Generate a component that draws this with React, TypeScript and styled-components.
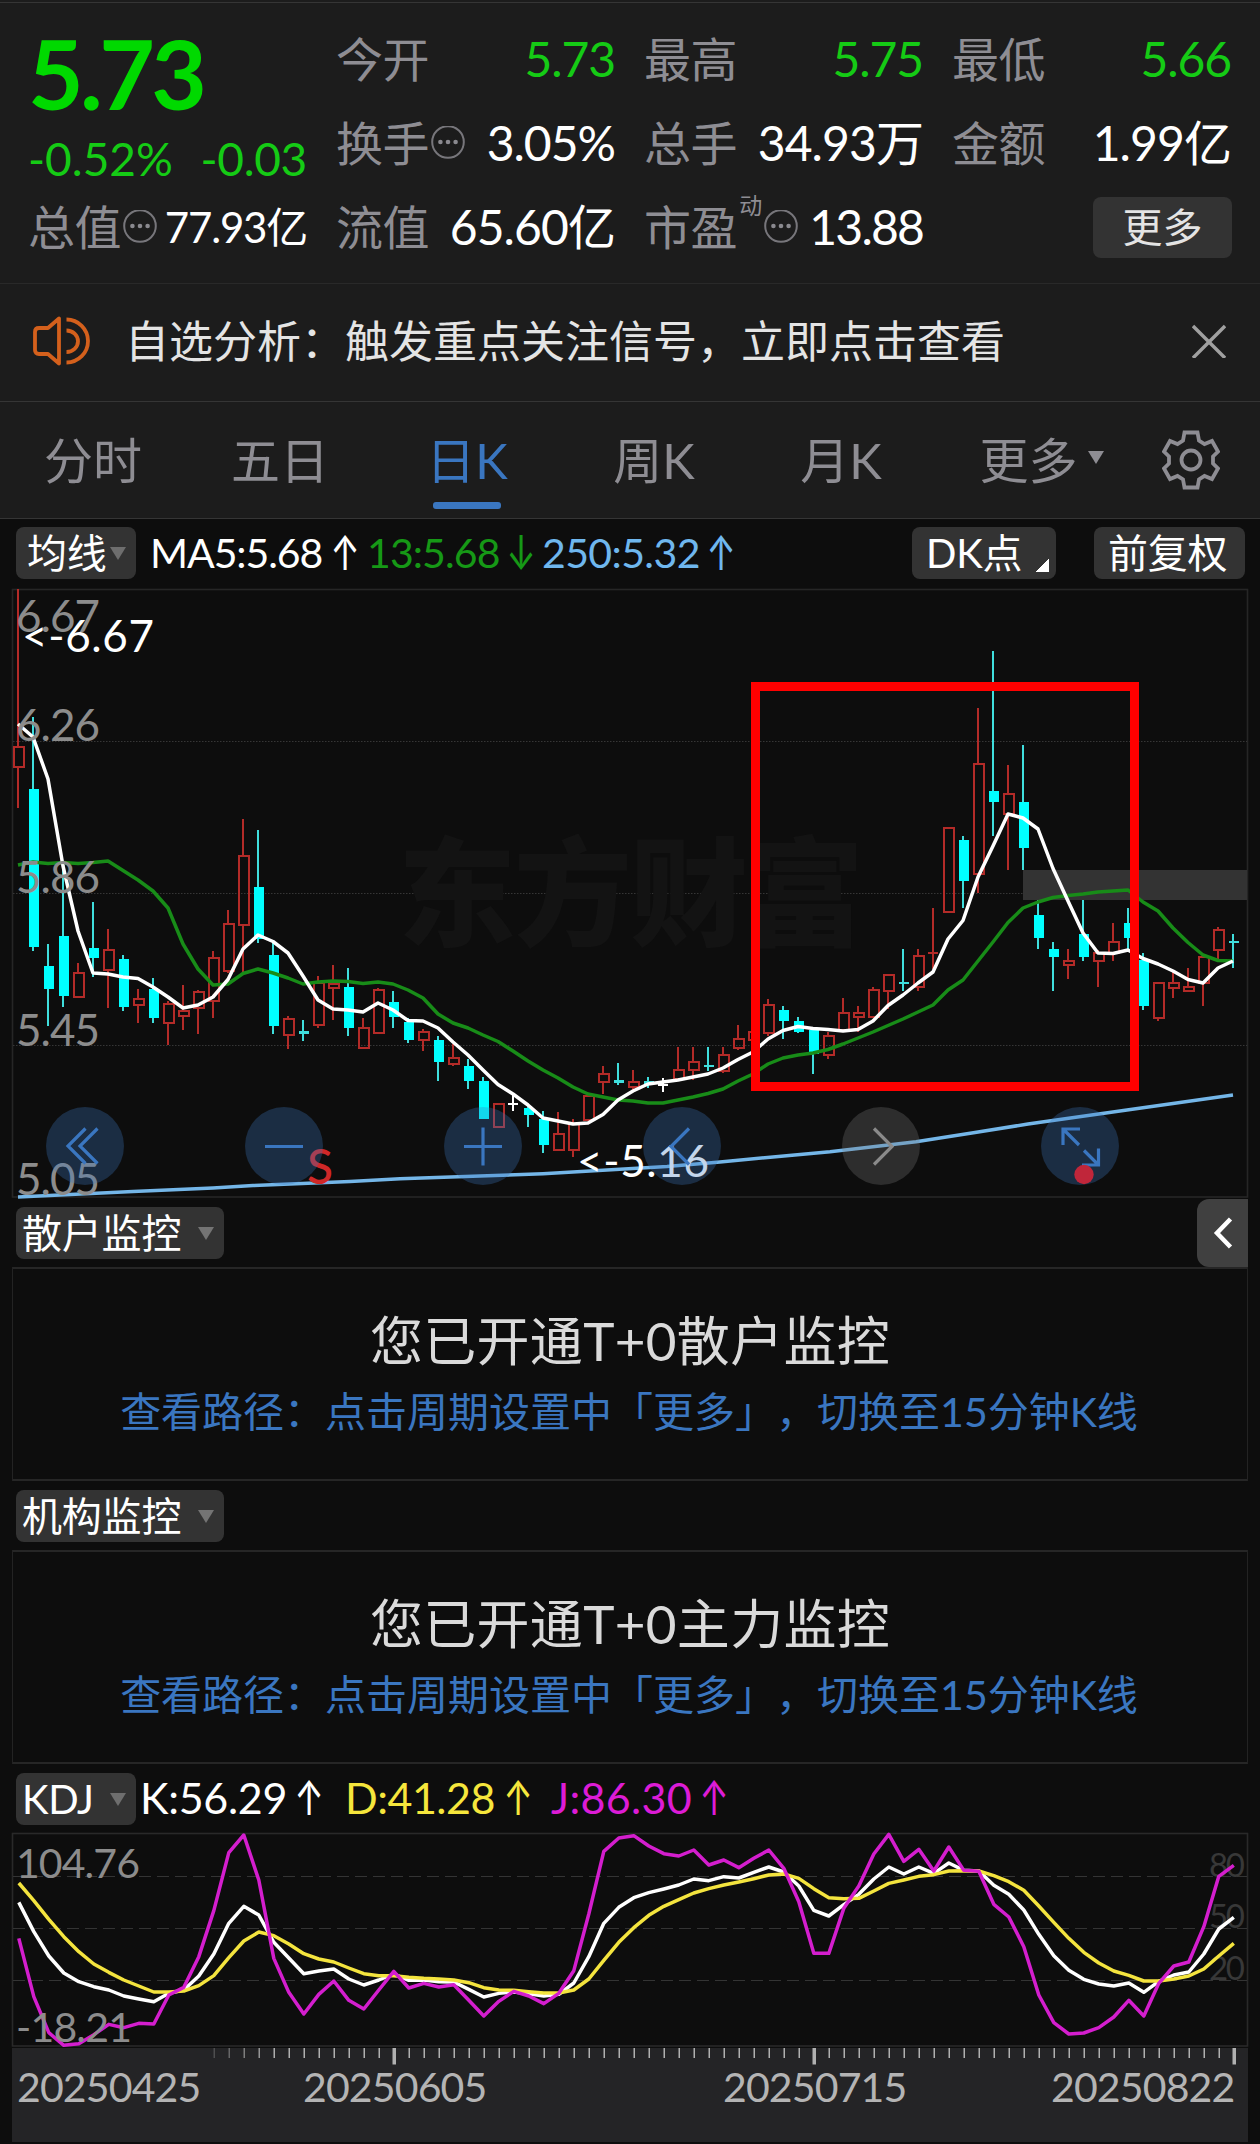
import React from "react";
import styled, { createGlobalStyle } from "styled-components";

const GlobalStyle = createGlobalStyle`
  * { box-sizing: border-box; }
  body { margin: 0; background: #0d0d0d; }
`;

const FONT = `Lato, "Noto Sans CJK SC", sans-serif`;
const BLUE = "#3a76c0";
const GREY = "#8e8d93";
const GREEN = "#15cb15";

const Page = styled.div`
  width: 1260px;
  height: 2144px;
  overflow: hidden;
  background: #0d0d0d;
  font-family: ${FONT};
  color: #fff;
  display: flex;
  flex-direction: column;
  white-space: nowrap;
  text-spacing-trim: space-all;
`;

/* ---------- quote header ---------- */

const QuoteHeader = styled.header`
  height: 284px;
  flex: none;
  background: #1c1c1c;
  border-bottom: 1px solid #292929;
  padding-top: 2px;
`;

const QuoteGrid = styled.div`
  border-top: 1px solid #353535;
  padding: 14px 0 0 28px;
  display: grid;
  grid-template-columns: repeat(4, 279px);
  grid-template-rows: repeat(3, 84px);
  column-gap: 29px;
`;

const PriceCell = styled.div`
  grid-row: span 2;
  display: flex;
  flex-direction: column;
  padding-top: 16px;
  color: ${GREEN};
`;

const Price = styled.div`
  font-size: 96px;
  font-weight: 700;
  line-height: 80px;
  letter-spacing: -3.6px;
  color: #00d900;
`;

const ChangeRow = styled.div`
  display: flex;
  justify-content: space-between;
  margin-top: 21px;
  font-size: 46px;
  line-height: 50px;
`;

const Num = styled.span<{ $ls?: number }>`
  letter-spacing: ${(p) => p.$ls ?? 0}px;
`;

const Cell = styled.div`
  display: flex;
  align-items: center;
  justify-content: space-between;
`;

const Label = styled.div`
  display: flex;
  align-items: center;
  gap: 2px;
  font-size: 47px;
  line-height: 60px;
  color: ${GREY};
  letter-spacing: -0.4px;
`;

const Value = styled.div<{ $size?: number; $color?: string; $ls?: number }>`
  font-size: ${(p) => p.$size ?? 48}px;
  line-height: 60px;
  color: ${(p) => p.$color ?? "#fff"};
  letter-spacing: ${(p) => p.$ls ?? -1.1}px;
`;

const Sup = styled.sup`
  font-size: 23px;
  line-height: 24px;
  align-self: flex-start;
  margin-top: -4px;
`;

const MoreButton = styled.button`
  all: unset;
  justify-self: end;
  align-self: center;
  width: 139px;
  height: 61px;
  margin-right: -1px;
  border-radius: 8px;
  background: #333;
  color: #e4e4e4;
  font-size: 40px;
  line-height: 58px;
  text-align: center;
`;

const Dots = () => (
  <svg width="34" height="34" viewBox="0 0 34 34" fill="none">
    <circle cx="17" cy="16" r="15.8" stroke="#77767b" strokeWidth="2" />
    <g fill="#8a898f">
      <circle cx="9.4" cy="16" r="2.3" />
      <circle cx="17" cy="16" r="2.3" />
      <circle cx="24.6" cy="16" r="2.3" />
    </g>
  </svg>
);

/* ---------- notice ---------- */

const Notice = styled.div`
  height: 118px;
  flex: none;
  background: #1c1c1c;
  border-bottom: 1px solid #353535;
  display: flex;
  align-items: center;
  padding: 0 34px 4px 32px;
`;

const NoticeText = styled.div`
  margin-left: 33px;
  flex: 1;
  font-size: 44px;
  line-height: 60px;
  color: #e4e4e4;
`;

/* ---------- period tabs ---------- */

const Tabs = styled.nav`
  height: 117px;
  flex: none;
  background: #1c1c1c;
  border-bottom: 1px solid #353535;
  display: flex;
`;

const Tab = styled.div<{ $w: number; $active?: boolean; $icon?: boolean }>`
  width: ${(p) => p.$w}px;
  display: flex;
  align-items: center;
  justify-content: center;
  gap: 10px;
  padding: 0 ${(p) => (p.$icon ? 0 : 1)}px ${(p) => (p.$icon ? 0 : 5)}px 0;
  font-size: 49px;
  color: ${(p) => (p.$active ? BLUE : GREY)};
  position: relative;
  &::after {
    content: "";
    display: ${(p) => (p.$active ? "block" : "none")};
    position: absolute;
    left: 59px;
    bottom: 9px;
    width: 68px;
    height: 7px;
    border-radius: 3px;
    background: ${BLUE};
  }
`;

/* ---------- indicator bars ---------- */

const Bar = styled.div<{ $h: number; $pt: number }>`
  height: ${(p) => p.$h}px;
  flex: none;
  display: flex;
  align-items: flex-start;
  padding: ${(p) => p.$pt}px 15px 0 16px;
`;

const Pill = styled.div<{ $w: number; $pl: number; $ml?: number }>`
  width: ${(p) => p.$w}px;
  height: 52px;
  margin-left: ${(p) => p.$ml ?? 0}px;
  padding: 0 10px 0 ${(p) => p.$pl}px;
  border-radius: 8px;
  background: #333;
  font-size: 40px;
  line-height: 50px;
  letter-spacing: -0.2px;
  display: flex;
  align-items: center;
  justify-content: space-between;
`;

const Caret = styled.i<{ $c?: string }>`
  flex: none;
  width: 0;
  height: 0;
  border: 8.5px solid transparent;
  border-top: 13.5px solid ${(p) => p.$c ?? "#6e6e6e"};
  border-bottom: 0;
`;

const Corner = styled.i`
  width: 14px;
  height: 14px;
  margin: 23px -3px 0 0;
  background: linear-gradient(135deg, transparent 50%, #fff 50%);
`;

const Readings = styled.div<{ $pl: number; $lh?: number }>`
  display: flex;
  flex: 1;
  padding-left: ${(p) => p.$pl}px;
  line-height: ${(p) => p.$lh ?? 52}px;
`;

const Reading = styled.div<{ $c: string; $w: number; $ls: number; $size?: number; $gap?: number }>`
  width: ${(p) => p.$w}px;
  font-size: ${(p) => p.$size ?? 41}px;
  letter-spacing: ${(p) => p.$ls}px;
  color: ${(p) => p.$c};
  display: flex;
  gap: ${(p) => p.$gap ?? 8}px;
`;

const Arrow = styled.span`
  font-family: Inter, sans-serif;
  font-size: 48px;
  letter-spacing: 0;
  width: 26px;
  display: flex;
  justify-content: center;
  transform: scaleX(0.74);
`;

const SideTab = styled.div`
  width: 51px;
  height: 68px;
  margin: -8px -3px 0 auto;
  border-radius: 12px 0 0 12px;
  background: #404040;
  display: flex;
  align-items: center;
  justify-content: center;
`;

/* ---------- charts ---------- */

const ChartBox = styled.div<{ $h: number }>`
  position: relative;
  height: ${(p) => p.$h}px;
  flex: none;
  svg { display: block; overflow: visible; }
`;

const Controls = styled.div`
  position: absolute;
  left: 46px;
  top: 518px;
  display: flex;
  gap: 121px;
`;

const RoundButton = styled.div<{ $muted?: boolean }>`
  width: 78px;
  height: 78px;
  border-radius: 50%;
  background: ${(p) => (p.$muted ? "rgba(118,118,118,.3)" : "rgba(58,118,192,.3)")};
  color: ${(p) => (p.$muted ? "#8a8a8a" : BLUE)};
`;

const Highlight = styled.div`
  position: absolute;
  left: 751px;
  top: 93px;
  width: 388px;
  height: 409px;
  border: 9px solid #f00;
`;

type Candle = [kind: "R" | "C" | "W", high: number, top: number, bottom: number, low: number];

const candles: Candle[] = [
  ["R", 589, 747, 767, 808], ["C", 717, 789, 947, 951], ["C", 944, 966, 989, 1026], ["C", 866, 936, 996, 1007],
  ["R", 963, 973, 997, 997], ["C", 902, 948, 958, 977], ["R", 929, 950, 970, 1008], ["C", 955, 959, 1007, 1011],
  ["R", 989, 999, 1005, 1023], ["C", 978, 989, 1018, 1023], ["R", 1001, 1004, 1023, 1045], ["R", 985, 1011, 1016, 1030],
  ["R", 990, 992, 1008, 1034], ["R", 951, 958, 1001, 1018], ["R", 910, 924, 971, 973], ["R", 819, 856, 925, 972],
  ["C", 830, 887, 939, 943], ["C", 943, 955, 1026, 1034], ["R", 1016, 1019, 1035, 1049], ["C", 1020, 1031, 1034, 1041],
  ["R", 976, 983, 1025, 1028], ["R", 965, 984, 988, 1020], ["C", 968, 987, 1028, 1036], ["R", 1018, 1028, 1048, 1048],
  ["R", 988, 990, 1033, 1033], ["C", 991, 1002, 1017, 1028], ["C", 1018, 1022, 1040, 1043], ["R", 1029, 1032, 1040, 1051],
  ["C", 1036, 1040, 1062, 1081], ["R", 1044, 1058, 1064, 1066], ["C", 1059, 1066, 1081, 1089], ["C", 1077, 1081, 1119, 1119],
  ["R", 1104, 1104, 1127, 1127], ["W", 1094, 1103, 1105, 1111], ["C", 1105, 1108, 1115, 1127], ["C", 1111, 1119, 1145, 1153],
  ["R", 1112, 1134, 1150, 1150], ["R", 1119, 1124, 1150, 1157], ["R", 1096, 1096, 1120, 1120], ["R", 1066, 1074, 1082, 1094],
  ["C", 1063, 1080, 1083, 1085], ["R", 1070, 1082, 1087, 1091], ["C", 1077, 1081, 1084, 1088], ["W", 1078, 1084, 1086, 1092],
  ["R", 1047, 1070, 1079, 1079], ["R", 1047, 1062, 1070, 1080], ["C", 1047, 1065, 1067, 1071], ["R", 1047, 1055, 1071, 1073],
  ["R", 1025, 1039, 1048, 1050], ["R", 1025, 1032, 1040, 1040], ["R", 999, 1005, 1033, 1036], ["C", 1006, 1010, 1021, 1039],
  ["C", 1017, 1021, 1032, 1033], ["C", 1029, 1030, 1054, 1074], ["R", 1032, 1036, 1055, 1059], ["R", 998, 1013, 1030, 1030],
  ["R", 1006, 1013, 1017, 1032], ["R", 987, 990, 1017, 1018], ["R", 975, 975, 991, 1009], ["C", 949, 982, 984, 991],
  ["R", 949, 956, 987, 991], ["R", 908, 953, 953, 969], ["R", 828, 828, 912, 912], ["C", 836, 840, 881, 908],
  ["R", 708, 764, 874, 893], ["C", 651, 791, 802, 836], ["R", 765, 794, 814, 870], ["C", 745, 802, 848, 870],
  ["C", 900, 915, 938, 949], ["C", 942, 949, 957, 991], ["R", 949, 961, 965, 979], ["C", 900, 934, 957, 961],
  ["R", 950, 953, 961, 987], ["R", 923, 942, 953, 961], ["C", 908, 923, 938, 949], ["C", 953, 960, 1006, 1010],
  ["R", 982, 983, 1018, 1021], ["R", 972, 983, 988, 998], ["R", 968, 987, 991, 991], ["R", 957, 957, 983, 1006],
  ["R", 927, 930, 950, 960], ["C", 934, 941, 943, 968],
];

const ma5 = [
  724, 737, 779, 866, 931, 973, 974, 977, 978.5, 987, 997, 1008, 1005, 997, 979.5, 949, 935, 941.5, 953, 976, 1000, 1009,
  1010, 1012, 1003, 1010, 1020.5, 1021, 1028, 1042, 1055, 1070, 1084.5, 1094, 1105, 1118, 1121, 1124, 1123, 1114.5, 1100,
  1091, 1084, 1082, 1080, 1077, 1074, 1068, 1059.5, 1052, 1039, 1030.5, 1026.5, 1028.5, 1029.5, 1031, 1029.5, 1021, 1005.5,
  995, 983, 972, 939, 920.5, 877, 846, 814, 818, 829, 868.5, 901, 933, 953, 953.5, 950, 958.5, 964, 971, 979.5, 983, 968, 961,
];

const ma13 = [
  865, 862, 863.5, 862.5, 863.5, 862.5, 861, 870.5, 880, 891, 908, 944, 969, 985, 984, 973.5, 969, 973, 978, 984, 982, 981,
  981.5, 983.5, 982, 984, 990, 998, 1014, 1023, 1028, 1035, 1041.5, 1051, 1061, 1070, 1078, 1087, 1094, 1097, 1100, 1101,
  1103, 1103, 1100, 1097, 1093.5, 1089, 1081, 1074, 1064, 1058, 1055, 1053, 1049.5, 1044, 1038, 1032, 1025.5, 1019, 1012,
  1005, 990, 980, 961, 942, 922.5, 908, 902, 897.5, 895.5, 894, 892, 891, 890, 902, 911, 928, 942.5, 955, 960.5, 961,
];

const ma250 =
  "18,1197 133,1191.5 213,1188 253,1185.5 350,1181.5 400,1178.7 480,1176 543,1173.7 607,1170 667,1166.5 720,1162 773,1157 830,1151.7 916,1141.7 975,1132.5 1028,1124 1127,1110 1233,1095";

const kLine = [
  367, 455, 528, 579, 605, 620, 630, 648, 657, 665, 640, 630, 588, 522, 430, 379, 405, 487, 534, 581, 573, 567, 597, 615, 600,
  582, 601, 600, 605, 606, 628, 651, 640, 636, 641, 648, 643, 609, 530, 430, 382, 353, 338, 327, 315, 297, 302, 290, 294, 277,
  261, 276, 318, 391, 408, 374, 343, 297, 261, 282, 261, 280, 249, 271, 273, 316, 343, 390, 463, 527, 571, 598, 612, 618, 609,
  637, 604, 585, 576, 522, 447, 412,
];

const dLine = [
  309, 362, 418, 470, 515, 552, 577, 600, 618, 636, 636, 633, 617, 587, 533, 483, 456, 467, 492, 521, 537, 546, 564, 581, 587,
  587, 592, 595, 597, 600, 608, 623, 630, 631, 635, 639, 639, 630, 597, 541, 487, 443, 406, 379, 359, 339, 326, 315, 306, 296,
  285, 282, 295, 326, 353, 356, 355, 333, 310, 300, 289, 284, 273, 272, 273, 287, 305, 331, 378, 427, 475, 517, 549, 573, 586,
  603, 603, 597, 588, 567, 528, 490,
];

const jLine = [
  475, 650, 758, 796, 791, 764, 733, 743, 730, 732, 645, 622, 530, 392, 218, 165, 300, 535, 637, 702, 643, 603, 661, 687, 630,
  574, 624, 610, 621, 614, 661, 708, 664, 634, 648, 671, 640, 572, 402, 214, 174, 167, 198, 221, 228, 210, 255, 240, 263, 235,
  210, 265, 365, 520, 520, 385, 318, 222, 163, 244, 208, 273, 201, 271, 274, 373, 411, 500, 645, 728, 762, 759, 743, 711, 661,
  708, 610, 558, 546, 440, 289, 256,
];

const STEP = 15;
const line = (ys: number[], x0: number, f: (y: number) => number = (y) => y) =>
  ys.map((y, i) => `${x0 + i * STEP},${f(y)}`).join(" ");

const CandleShape = ({ c, i }: { c: Candle; i: number }) => {
  const [kind, high, top, bottom, low] = c;
  const x = 17 + i * STEP;
  if (kind === "R") {
    return (
      <g fill="#b32b28">
        {high < top && <rect x={x} y={high} width="2" height={top - high} />}
        {low > bottom && <rect x={x} y={bottom} width="2" height={low - bottom} />}
        {bottom > top ? (
          <rect x={x - 3} y={top} width="10" height={bottom - top} fill="none" stroke="#b32b28" strokeWidth="2" />
        ) : (
          <rect x={x - 4} y={top - 1} width="10" height="2" />
        )}
      </g>
    );
  }
  const wick = kind === "C" ? "#3fdedd" : "#fff";
  const body = kind === "W" ? "#fff" : bottom - top < 5 ? "#3fdedd" : "#00ffff";
  return (
    <g>
      <rect x={x} y={high} width="2" height={low - high} fill={wick} />
      <rect x={x - 4 + (kind === "W" ? 0 : 1)} y={top} width="10" height={bottom - top} fill={body} />
    </g>
  );
};

type TagProps = { x: number; y: number; w?: number; size: number; color: string; weight?: number; children: string };
const Tag = ({ x, y, w, size, color, weight = 400, children }: TagProps) => (
  <text x={x} y={y} fontSize={size} fill={color} fontFamily={FONT} fontWeight={weight} textLength={w}>
    {children}
  </text>
);

const PriceChart = () => (
  <svg width="1260" height="609" viewBox="0 589 1260 609">
    <rect x="12.5" y="589.5" width="1235" height="607.5" fill="none" stroke="#262626" strokeWidth="1.6" />
    {[741.5, 893.5, 1045.5].map((y) => (
      <line key={y} x1="13" x2="1247" y1={y} y2={y} stroke="#363636" strokeWidth="1" strokeDasharray="1.5 1.5" />
    ))}
    <Tag x={398} y={937} w={466} size={118} color="#131313" weight={900}>东方财富</Tag>
    <rect x="1023" y="870" width="224" height="30" fill="#333" />
    {candles.map((c, i) => <CandleShape key={i} c={c} i={i} />)}
    <g fill="none" strokeWidth="3.5" strokeLinejoin="round">
      <polyline points={ma250} stroke="#74b6e8" />
      <polyline points={line(ma13, 18)} stroke="#188c18" />
      <polyline points={line(ma5, 18)} stroke="#fff" />
    </g>
    {([["6.67", 632], ["6.26", 741], ["5.86", 893], ["5.45", 1046], ["5.05", 1195]] as const).map(([t, y]) => (
      <Tag key={t} x={16} y={y} w={84} size={44} color="#8c8c8c">{t}</Tag>
    ))}
    <Tag x={22} y={652} w={132} size={44} color="#fff">{"<-6.67"}</Tag>
    <Tag x={577} y={1177} w={132} size={44} color="#fff">{"<-5.16"}</Tag>
    <Tag x={307} y={1184} size={48} color="#d02828" weight={500}>S</Tag>
  </svg>
);

const iconPaths = [
  "M39.5 21.5 22 39 39.5 56.5M51.5 21.5 34 39 51.5 56.5",
  "M20 39.5H58",
  "M20 39.5H58M39 20.5V58.5",
  "M46 21.5 28 39.5 46 57.5",
  "M32 21.5 50 39.5 32 57.5",
  "M39 22H22V38M22 22 38 38M41 58H57.5V41.5M57.5 58 43 43.5",
];

const KdjChart = () => (
  <svg width="1260" height="214" viewBox="0 1833 1260 214">
    <rect x="12.5" y="1833.5" width="1235" height="212.5" fill="none" stroke="#292929" strokeWidth="1.6" />
    {[1876.5, 1928.5, 1980.5].map((y) => (
      <line key={y} x1="13" x2="1247" y1={y} y2={y} stroke="#343434" strokeWidth="1" strokeDasharray="12 6" />
    ))}
    {([["80", 1876.5], ["50", 1928], ["20", 1980]] as const).map(([t, y]) => (
      <Tag key={t} x={1209} y={y} w={36} size={33} color="#383838">{t}</Tag>
    ))}
    <g fill="none" strokeWidth="3.5" strokeLinejoin="round">
      <polyline points={line(kLine, 18.8, (y) => 1780 + y / 3)} stroke="#fff" />
      <polyline points={line(dLine, 18.8, (y) => 1780 + y / 3)} stroke="#f4e43e" />
      <polyline points={line(jLine, 18.8, (y) => 1780 + y / 3)} stroke="#d41ece" />
    </g>
    <Tag x={16} y={1878} w={124} size={41} color="#8c8c8c">104.76</Tag>
    <Tag x={16} y={2042} w={116} size={41} color="#8c8c8c">-18.21</Tag>
  </svg>
);

const DateAxis = styled.div`
  height: 94px;
  flex: none;
  margin: 1px 12px 0;
  background: #242426;
  svg { display: block; }
`;

const Dates = styled.div`
  display: flex;
  margin-top: -3px;
  padding: 0 13px 0 5px;
  font-size: 41px;
  line-height: 50px;
  letter-spacing: -0.85px;
  color: #b4b4b4;
`;

const DateText = styled.span<{ $ml?: number }>`
  width: 184px;
  margin-left: ${(p) => p.$ml ?? 0}px;
`;

const ticks = Array.from({ length: 69 }, (_, k) => k + 13);

/* ---------- monitor panels ---------- */

const PanelBox = styled.section`
  height: 214px;
  flex: none;
  margin: 0 12px;
  border: 1px solid #232323;
  border-top: 2px solid #262626;
  border-bottom: 2px solid #262626;
  display: flex;
  flex-direction: column;
  align-items: center;
`;

const PanelTitle = styled.div`
  margin-top: 37px;
  font-size: 53px;
  line-height: 70px;
  letter-spacing: 0.3px;
  color: #dadada;
`;

const PanelLink = styled.div`
  margin: 6px 2px 0 0;
  font-size: 41px;
  line-height: 60px;
  color: ${BLUE};
`;

const Monitor = ({ name, title, side }: { name: string; title: string; side?: boolean }) => (
  <>
    <Bar $h={69} $pt={9}>
      <Pill $w={208} $pl={6}>{name}<Caret $c="#747474" /></Pill>
      {side && (
        <SideTab>
          <svg width="20" height="32" viewBox="0 0 20 32" fill="none" stroke="#fff" strokeWidth="4.5">
            <path d="M17.5 2 4 16 17.5 30" />
          </svg>
        </SideTab>
      )}
    </Bar>
    <PanelBox>
      <PanelTitle>{title}</PanelTitle>
      <PanelLink>查看路径：点击周期设置中「更多」，切换至15分钟K线</PanelLink>
    </PanelBox>
  </>
);

const periods = ["分时", "五日", "日K", "周K", "月K"];

export default function App() {
  return (
    <Page>
      <GlobalStyle />
      <QuoteHeader>
        <QuoteGrid>
          <PriceCell>
            <Price>5.73</Price>
            <ChangeRow>
              <Num>-0.52%</Num>
              <Num $ls={-0.3}>-0.03</Num>
            </ChangeRow>
          </PriceCell>
          <Cell><Label>今开</Label><Value $color={GREEN}>5.73</Value></Cell>
          <Cell><Label>最高</Label><Value $color={GREEN}>5.75</Value></Cell>
          <Cell><Label>最低</Label><Value $color={GREEN}>5.66</Value></Cell>
          <Cell><Label>换手<Dots /></Label><Value $ls={-1}>3.05%</Value></Cell>
          <Cell><Label>总手</Label><Value $ls={-0.9}>34.93万</Value></Cell>
          <Cell><Label>金额</Label><Value $ls={-0.9}>1.99亿</Value></Cell>
          <Cell><Label>总值<Dots /></Label><Value $size={42} $ls={-1.2}>77.93亿</Value></Cell>
          <Cell><Label>流值</Label><Value $ls={-0.9}>65.60亿</Value></Cell>
          <Cell><Label>市盈<Sup>动</Sup><Dots /></Label><Value $ls={-1.8}>13.88</Value></Cell>
          <MoreButton>更多</MoreButton>
        </QuoteGrid>
      </QuoteHeader>

      <Notice>
        <svg width="60" height="50" viewBox="0 0 60 50" fill="none" stroke="#d4601c" strokeWidth="3.8">
          <path d="M27 2.5V47.5L16 38H7Q3 38 3 34V16Q3 12 7 12H16Z" strokeLinejoin="round" />
          <path d="M34.5 14.5A11.5 10.75 0 0 1 34.5 36M34.5 3.5A21.5 21.5 0 0 1 34.5 46.5" />
        </svg>
        <NoticeText>自选分析：触发重点关注信号，立即点击查看</NoticeText>
        <svg width="34" height="34" viewBox="0 0 34 34" stroke="#a0a0a0" strokeWidth="3.4">
          <path d="M1 2 33 34M33 2 1 34" />
        </svg>
      </Notice>

      <Tabs>
        {periods.map((p) => <Tab key={p} $w={187} $active={p === "日K"}>{p}</Tab>)}
        <Tab $w={214}>更多<Caret $c={GREY} /></Tab>
        <Tab $w={84} $icon>
          <svg width="58" height="60" viewBox="0 0 58 60" fill="none" stroke={GREY} strokeWidth="3.8">
            <path d="M22.5 2.5H35.5L37 10.5 42.5 14 50 11 56 21.5 51 26.5V33.5L56 38.5 50 49 42.5 46 37 49.5 35.5 57.5H22.5L21 49.5 15.5 46 8 49 2 38.5 7 33.5V26.5L2 21.5 8 11 15.5 14 21 10.5Z" />
            <circle cx="29" cy="30" r="9.5" />
          </svg>
        </Tab>
      </Tabs>

      <Bar $h={70} $pt={8}>
        <Pill $w={120} $pl={11}>均线<Caret /></Pill>
        <Readings $pl={14}>
          <Reading $c="#fff" $w={217} $ls={-1.1} $gap={10}>MA5:5.68<Arrow>↑</Arrow></Reading>
          <Reading $c="#169816" $w={175} $ls={-0.9}>13:5.68<Arrow>↓</Arrow></Reading>
          <Reading $c="#6fb7ee" $w={200} $ls={-0.6}>250:5.32<Arrow>↑</Arrow></Reading>
        </Readings>
        <Pill $w={144} $pl={14}>DK点<Corner /></Pill>
        <Pill $w={151} $pl={14} $ml={38}>前复权</Pill>
      </Bar>

      <ChartBox $h={609}>
        <PriceChart />
        <Controls>
          {iconPaths.map((d, i) => (
            <RoundButton key={d} $muted={i === 4}>
              <svg width="78" height="78" viewBox="0 0 78 78" fill="none" stroke="currentColor" strokeWidth="3.2">
                <path d={d} />
                {i === 5 && <circle cx="43" cy="67.5" r="9.7" fill="#c0263a" stroke="none" />}
              </svg>
            </RoundButton>
          ))}
        </Controls>
        <Highlight />
      </ChartBox>

      <Monitor name="散户监控" title="您已开通T+0散户监控" side />
      <Monitor name="机构监控" title="您已开通T+0主力监控" />

      <Bar $h={69} $pt={9}>
        <Pill $w={120} $pl={6}>KDJ<Caret /></Pill>
        <Readings $pl={4} $lh={50}>
          <Reading $c="#fff" $w={205} $ls={-0.3} $size={43} $gap={9}>K:56.29<Arrow>↑</Arrow></Reading>
          <Reading $c="#f6e63c" $w={206} $ls={-0.5} $size={43} $gap={10}>D:41.28<Arrow>↑</Arrow></Reading>
          <Reading $c="#dc1cd6" $w={205} $ls={0.3} $size={43} $gap={9}>J:86.30<Arrow>↑</Arrow></Reading>
        </Readings>
      </Bar>

      <ChartBox $h={214}>
        <KdjChart />
      </ChartBox>

      <DateAxis>
        <svg width="1236" height="17" viewBox="12 0 1236 17">
          {ticks.map((i) => {
            const major = i === 25 || i === 53 || i === 81;
            return (
              <rect
                key={i}
                x={18.5 + i * STEP - (major ? 1 : 0)}
                y="0"
                width={major ? 3.5 : 1.5}
                height={major ? 16.5 : 10}
                fill="#b0b0b0"
                opacity={Math.min(1, 0.3 + (i - 13) * 0.17)}
              />
            );
          })}
        </svg>
        <Dates>
          <DateText>20250425</DateText>
          <DateText $ml={102}>20250605</DateText>
          <DateText $ml={236}>20250715</DateText>
          <DateText $ml={144}>20250822</DateText>
        </Dates>
      </DateAxis>
    </Page>
  );
}
